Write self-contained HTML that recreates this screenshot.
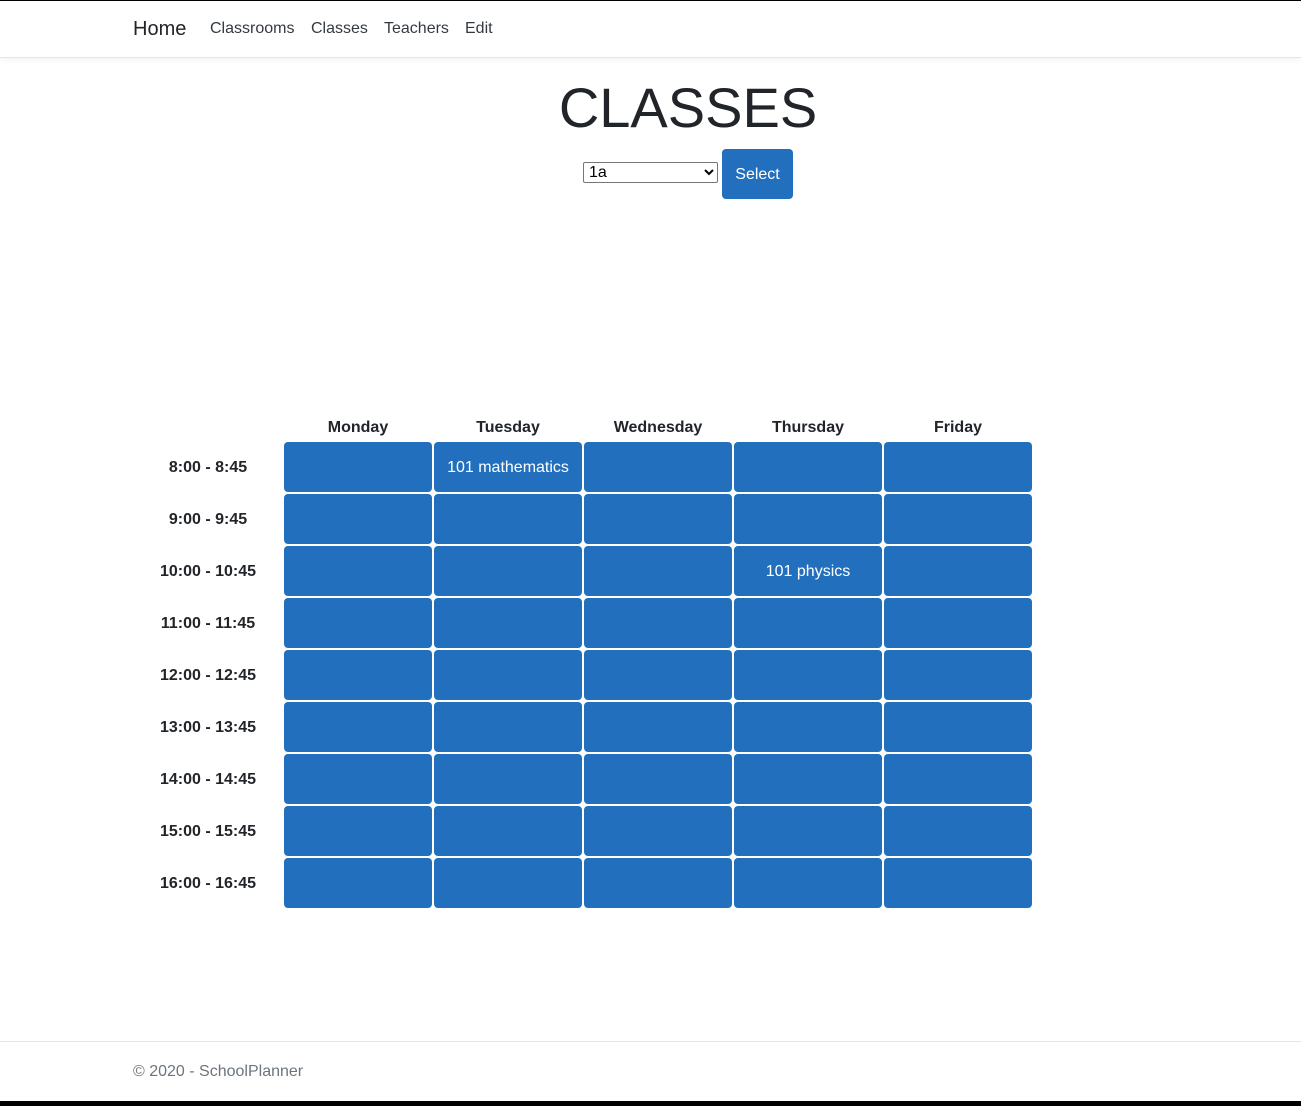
<!DOCTYPE html>
<html><head><meta charset="utf-8"><style>
body{margin:0;width:1301px;height:1106px;position:relative;font-family:"Liberation Sans",sans-serif;background:#fff;overflow:hidden;color:#212529}
.top{position:absolute;left:0;top:0;width:1301px;height:1px;background:#000}
.nav{position:absolute;left:0;top:1px;width:1301px;height:56px;border-bottom:1px solid #e5e5e5;box-shadow:0 2px 6px rgba(0,0,0,.05)}
.a{position:absolute;top:19px;font-size:16px;color:#343a40}
.home{position:absolute;left:133px;top:17px;font-size:20px;color:#212529}
h1{position:absolute;margin:0;left:0;width:1376px;text-align:center;top:76px;font-size:56px;font-weight:400;line-height:64px}
select{position:absolute;left:583px;top:162px;width:135px;height:21px;font-size:16px;font-family:"Liberation Sans",sans-serif;border:1px solid #767676;border-radius:2px;background:#fff;padding:0 1px}
.sel{position:absolute;left:722px;top:149px;width:71px;height:50px;background:#2270bd;border-radius:4px;color:#fff;font-size:16px;line-height:52px;text-align:center}
.h{position:absolute;top:419px;width:150px;text-align:center;font-weight:700;font-size:16px}
.t{position:absolute;left:133px;width:150px;text-align:center;font-weight:700;font-size:16px;line-height:52px}
.c{position:absolute;width:148px;height:50px;background:#2270bd;border-radius:4px;color:#fff;font-size:16px;line-height:52px;text-align:center}
.foot{position:absolute;left:0;top:1041px;width:1301px;border-top:1px solid #e5e5e5}
.ft{position:absolute;left:133px;top:1063px;font-size:16px;color:#6c757d}
.bot{position:absolute;left:0;top:1101px;width:1301px;height:5px;background:#000}
</style></head><body>
<div class="top"></div>
<div class="nav"><span class="home">Home</span><span class="a" style="left:210px">Classrooms</span><span class="a" style="left:311px">Classes</span><span class="a" style="left:384px">Teachers</span><span class="a" style="left:465px">Edit</span></div>
<h1>CLASSES</h1>
<select><option>1a</option></select>
<div class="sel">Select</div>
<div class="h" style="left:283px">Monday</div>
<div class="h" style="left:433px">Tuesday</div>
<div class="h" style="left:583px">Wednesday</div>
<div class="h" style="left:733px">Thursday</div>
<div class="h" style="left:883px">Friday</div>
<div id="g"></div>
<script>
var times=["8:00 - 8:45","9:00 - 9:45","10:00 - 10:45","11:00 - 11:45","12:00 - 12:45","13:00 - 13:45","14:00 - 14:45","15:00 - 15:45","16:00 - 16:45"],h="";
for(var r=0;r<9;r++){var y=442+52*r;h+='<div class="t" style="top:'+y+'px">'+times[r]+'</div>';
for(var c=0;c<5;c++){var txt=(r==0&&c==1)?"101 mathematics":(r==2&&c==3)?"101 physics":"";
h+='<div class="c" style="top:'+y+'px;left:'+(284+150*c)+'px">'+txt+'</div>';}}
document.getElementById("g").innerHTML=h;
</script>
<div class="foot"></div>
<div class="ft">© 2020 - SchoolPlanner</div>
<div class="bot"></div>
</body></html>
